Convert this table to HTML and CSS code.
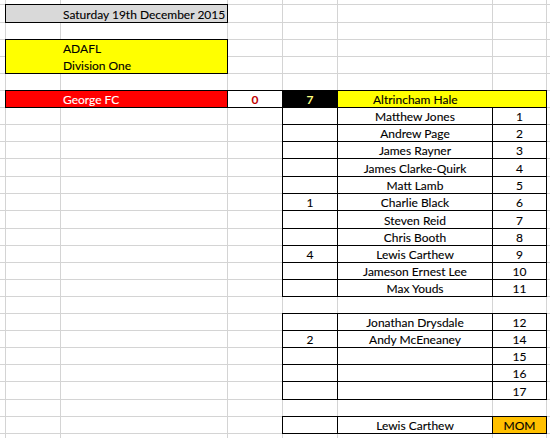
FILE: index.html
```html
<!DOCTYPE html>
<html>
<head>
<meta charset="utf-8">
<link rel="stylesheet" href="styles.css">
</head>
<body>
<div class="sheet">
<table class="grid">
<colgroup>
<col class="c0"><col class="ca"><col class="cb"><col class="cc"><col class="cd"><col class="ce"><col class="cf"><col class="cg">
</colgroup>
<tbody>
<tr class="r4"><td></td><td></td><td></td><td></td><td></td><td></td><td></td><td></td></tr>
<tr class="r17"><td></td><td class="bx date" colspan="2">Saturday 19th December 2015</td><td></td><td></td><td></td><td></td><td></td></tr>
<tr class="r16"><td></td><td></td><td></td><td></td><td></td><td></td><td></td><td></td></tr>
<tr class="r16"><td></td><td class="bx league" colspan="2" rowspan="2"><div class="ln l1">ADAFL</div><div class="ln l2">Division One</div></td><td></td><td></td><td></td><td></td><td></td></tr>
<tr class="r16"><td></td><td></td><td></td><td></td><td></td><td></td></tr>
<tr class="r16"><td></td><td></td><td></td><td></td><td></td><td></td><td></td><td></td></tr>
<tr class="r16"><td></td><td class="bx home" colspan="2">George FC</td><td class="bx score-home">0</td><td class="bx score-away">7</td><td class="bx away" colspan="2">Altrincham Hale</td><td></td></tr>
<tr class="r16"><td></td><td></td><td></td><td></td><td class="bx ctr"></td><td class="bx ctr">Matthew Jones</td><td class="bx ctr">1</td><td></td></tr>
<tr class="r16"><td></td><td></td><td></td><td></td><td class="bx ctr"></td><td class="bx ctr">Andrew Page</td><td class="bx ctr">2</td><td></td></tr>
<tr class="r16"><td></td><td></td><td></td><td></td><td class="bx ctr"></td><td class="bx ctr">James Rayner</td><td class="bx ctr">3</td><td></td></tr>
<tr class="r17"><td></td><td></td><td></td><td></td><td class="bx ctr"></td><td class="bx ctr">James Clarke-Quirk</td><td class="bx ctr">4</td><td></td></tr>
<tr class="r16"><td></td><td></td><td></td><td></td><td class="bx ctr"></td><td class="bx ctr">Matt Lamb</td><td class="bx ctr">5</td><td></td></tr>
<tr class="r16"><td></td><td></td><td></td><td></td><td class="bx ctr">1</td><td class="bx ctr">Charlie Black</td><td class="bx ctr">6</td><td></td></tr>
<tr class="r17"><td></td><td></td><td></td><td></td><td class="bx ctr"></td><td class="bx ctr">Steven Reid</td><td class="bx ctr">7</td><td></td></tr>
<tr class="r16"><td></td><td></td><td></td><td></td><td class="bx ctr"></td><td class="bx ctr">Chris Booth</td><td class="bx ctr">8</td><td></td></tr>
<tr class="r16"><td></td><td></td><td></td><td></td><td class="bx ctr">4</td><td class="bx ctr">Lewis Carthew</td><td class="bx ctr">9</td><td></td></tr>
<tr class="r16"><td></td><td></td><td></td><td></td><td class="bx ctr"></td><td class="bx ctr">Jameson Ernest Lee</td><td class="bx ctr">10</td><td></td></tr>
<tr class="r16"><td></td><td></td><td></td><td></td><td class="bx ctr"></td><td class="bx ctr">Max Youds</td><td class="bx ctr">11</td><td></td></tr>
<tr class="r16"><td></td><td></td><td></td><td></td><td></td><td></td><td></td><td></td></tr>
<tr class="r16"><td></td><td></td><td></td><td></td><td class="bx ctr"></td><td class="bx ctr">Jonathan Drysdale</td><td class="bx ctr">12</td><td></td></tr>
<tr class="r16"><td></td><td></td><td></td><td></td><td class="bx ctr">2</td><td class="bx ctr">Andy McEneaney</td><td class="bx ctr">14</td><td></td></tr>
<tr class="r16"><td></td><td></td><td></td><td></td><td class="bx ctr"></td><td class="bx ctr"></td><td class="bx ctr">15</td><td></td></tr>
<tr class="r16"><td></td><td></td><td></td><td></td><td class="bx ctr"></td><td class="bx ctr"></td><td class="bx ctr">16</td><td></td></tr>
<tr class="r17"><td></td><td></td><td></td><td></td><td class="bx ctr"></td><td class="bx ctr"></td><td class="bx ctr">17</td><td></td></tr>
<tr class="r16"><td></td><td></td><td></td><td></td><td></td><td></td><td></td><td></td></tr>
<tr class="r16"><td></td><td></td><td></td><td></td><td class="bx ctr"></td><td class="bx ctr">Lewis Carthew</td><td class="bx ctr mom">MOM</td><td></td></tr>
<tr class="r16"><td></td><td></td><td></td><td></td><td></td><td></td><td></td><td></td></tr>
</tbody>
</table>
</div>
</body>
</html>
```
FILE: styles.css
```css
html, body {
  margin: 0;
  padding: 0;
  background: #fff;
}
.sheet {
  width: 550px;
  height: 438px;
  overflow: hidden;
}
.grid {
  border-collapse: separate;
  border-spacing: 1px;
  background: #d4d4d4;
  table-layout: fixed;
  width: 569px;
  margin: -1px 0 0 -1px;
}
.c0 { width: 5px; }
.ca { width: 54px; }
.cb { width: 166px; }
.cc { width: 54px; }
.cd { width: 54px; }
.ce { width: 154px; }
.cf { width: 53px; }
.cg { width: 20px; }
.r4 { height: 4px; }
.r16 { height: 16px; }
.r17 { height: 17px; }
td {
  background: #fff;
  padding: 0;
  vertical-align: bottom;
  white-space: nowrap;
  overflow: hidden;
  font-family: Lato, "Liberation Sans", sans-serif;
  font-size: 12px;
  line-height: 14px;
  color: #000;
  -webkit-text-stroke: 0.1px currentColor;
}
.bx { box-shadow: 0 0 0 1px #000; }
.ctr { text-align: center; }
.date {
  background: #d9d9d9;
  padding-left: 57px;
}
.league {
  background: #ffff00;
  padding-left: 57px;
}
.ln {
  display: flex;
  align-items: flex-end;
}
.l1 { height: 16px; }
.l2 { height: 17px; }
.home {
  background: #ff0000;
  color: #fff;
  padding-left: 57px;
}
.score-home {
  text-align: center;
  color: #c00000;
  font-weight: bold;
  -webkit-text-stroke: 0;
}
.score-away {
  text-align: center;
  background: #000;
  color: #ffff80;
  font-weight: bold;
  -webkit-text-stroke: 0;
}
.away {
  background: #ffff00;
  padding-left: 35px;
}
.mom {
  background: #ffc000;
}
```
